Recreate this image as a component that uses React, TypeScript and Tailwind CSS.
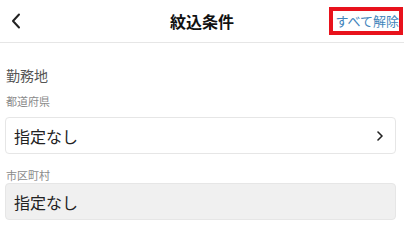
import React from "react";

function ChevronLeft(): React.JSX.Element {
  return (
    <svg width="10" height="16" viewBox="0 0 10 16" fill="none" className="block">
      <path d="M8 1.5 L2 8 L8 14.5" stroke="#222" strokeWidth="2" strokeLinecap="round" strokeLinejoin="round" />
    </svg>
  );
}

function ChevronRight(): React.JSX.Element {
  return (
    <svg width="6" height="10" viewBox="0 0 6 10" fill="none" className="block">
      <path d="M1 1 L5 5 L1 9" stroke="#222" strokeWidth="1.6" strokeLinecap="round" strokeLinejoin="round" />
    </svg>
  );
}

export default function App(): React.JSX.Element {
  return (
    <div
      className="h-[229px] w-[404px] overflow-hidden bg-white"
      style={{ fontFamily: '"Noto Sans CJK JP", "Noto Sans", sans-serif' }}
    >
      <header className="grid h-[43px] grid-cols-[1fr_auto_1fr] items-center border-b border-[#e6e6e6]">
        <div className="pl-[11px]">
          <ChevronLeft />
        </div>
        <h1 className="text-[16px] leading-[22px] font-bold text-[#111]">紋込条件</h1>
        <div className="flex justify-end pr-[1px]">
          <button className="flex h-[28px] items-center border-4 border-[#e8121c] pl-[2px] pr-0 text-[13px] leading-[18px] text-[#3f84bb]">
            すべて解除
          </button>
        </div>
      </header>

      <section className="pl-[5px] pr-[8px] pt-[22px]">
        <h2 className="pl-px text-[14px] leading-[20px] text-[#555]">勤務地</h2>

        <p className="mt-[8px] pl-px text-[11px] leading-[16px] text-[#8a8a8a]">都道府県</p>
        <div className="mt-[8px] flex h-[37px] items-center justify-between rounded-[4px] border border-[#e6e6e6] bg-white pl-[8px] pr-[12px]">
          <span className="text-[16px] leading-[22px] text-[#222]">指定なし</span>
          <ChevronRight />
        </div>

        <p className="mt-[13px] pl-px text-[11px] leading-[16px] text-[#8a8a8a]">市区町村</p>
        <div className="flex h-[37px] items-center rounded-[4px] border border-[#e6e6e6] bg-[#f0f0f0] pl-[8px]">
          <span className="text-[16px] leading-[22px] text-[#222]">指定なし</span>
        </div>
      </section>
    </div>
  );
}
